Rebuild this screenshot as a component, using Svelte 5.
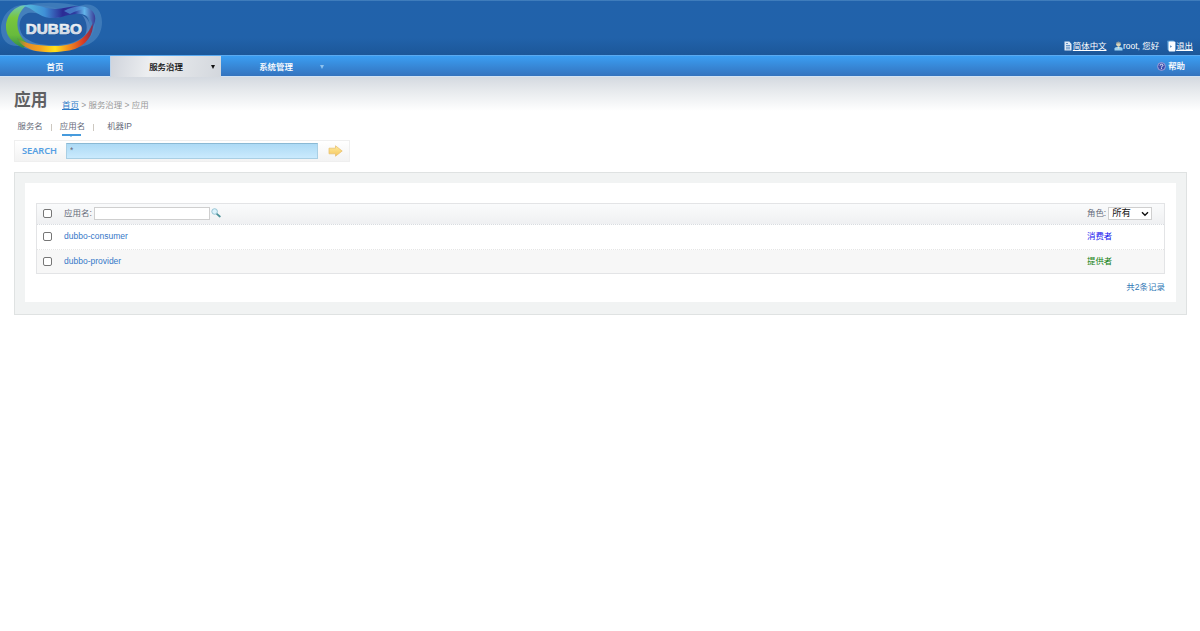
<script>
  let query = $state('*');
  let filter = $state('');
  const rows = [
    { name: 'dubbo-consumer', role: '消费者', color: 'blue' },
    { name: 'dubbo-provider', role: '提供者', color: 'green' }
  ];
</script>

<header>
  <svg class="logo" width="106" height="55" viewBox="0 0 106 55">
    <defs>
      <linearGradient id="warm" x1="0" x2="1">
        <stop offset="0" stop-color="#4ba03c" /><stop offset=".12" stop-color="#e08a2a" /><stop offset=".3" stop-color="#f5a21d" />
        <stop offset=".5" stop-color="#ffe21b" /><stop offset=".7" stop-color="#f08420" />
        <stop offset=".88" stop-color="#d63a24" /><stop offset="1" stop-color="#7a2c58" />
      </linearGradient>
      <linearGradient id="cool" x1="0" x2="1">
        <stop offset="0" stop-color="#58c0dc" /><stop offset=".3" stop-color="#3f8fd6" />
        <stop offset=".55" stop-color="#2b2a94" /><stop offset=".72" stop-color="#2f3da0" /><stop offset=".85" stop-color="#62b4ea" /><stop offset="1" stop-color="#3a3a94" />
      </linearGradient>
      <linearGradient id="leaf" x1="0" x2="0" y1="0" y2="1">
        <stop offset="0" stop-color="#6fc9b9" /><stop offset=".3" stop-color="#79c63c" /><stop offset=".7" stop-color="#68bb3c" /><stop offset="1" stop-color="#2f8a4a" />
      </linearGradient>
      <linearGradient id="steel" x1="0" x2="0" y1="0" y2="1">
        <stop offset="0" stop-color="#fff" /><stop offset="1" stop-color="#bcc6d6" />
      </linearGradient>
    </defs>
    <path d="M25 5C12 4 1 15 1 29c0 12 8 18 19 17 14 8 42 8 58 1 14-1 24-10 24-25C102 8 92 1 79 6 63 2 42 2 25 5Z" fill="#5a92c8" opacity=".5" />
    <path d="M25 7C12 10 5 20 7 31c3 11 14 17 30 19 17 2 35 0 46-6 11-7 14-18 11-27C88 6 74 6 60 9 47 5 37 4 25 7Z" fill="#4a83bf" opacity=".6" />
    <path d="M28 13C19 16 17 27 23 36c8 7 16 9 30 9 13 0 22-2 30-8 8-7 8-17 2-22-8-5-16-1-28 3-12 1-17-7-29-5Z" fill="#235da5" />
    <path d="M27 5C14 5 6 16 6 27c0 9 6 16 17 21l6-4C15 36 13 15 27 5Z" fill="url(#leaf)" />
    <path d="M17 38c8 6 22 8 38 8 18 0 32-6 38-24 1 14-8 23-18 27-13 4-33 4-43 1-8-3-13-7-15-12Z" fill="url(#warm)" />
    <path d="M23 6c12-4 21 3 32 3 12 0 20-6 33-1 8 4 9 11 5 19-1-8-6-13-13-13-12-1-19 5-30 4C38 17 34 8 23 6Z" fill="url(#cool)" />
    <path d="M64 11c9-5 18-6 24-2-7 0-13 2-18 5Z" fill="#54a2e0" opacity=".6" />
    <path d="M82 15c9 4 10 14 3 20 3-6 2-14-3-20Z" fill="#6c9bd2" opacity=".6" />
    <text x="26.3" y="34.4" textLength="56" lengthAdjust="spacingAndGlyphs" font-family="Liberation Sans, sans-serif" font-size="13.8" font-weight="700" fill="none" stroke="#1d4a8c" stroke-width="2" opacity=".45">DUBBO</text>
    <text x="25.8" y="34.1" textLength="56" lengthAdjust="spacingAndGlyphs" font-family="Liberation Sans, sans-serif" font-size="13.8" font-weight="700" fill="url(#steel)" stroke="#dfe5ee" stroke-width=".7">DUBBO</text>
  </svg>
  <div class="user">
    <svg width="8" height="10" viewBox="0 0 8 10"><path d="M.5.5h4.8L7.5 3v6.5h-7Z" fill="#dfeaf6" /><path d="M2 2.5h2M2 4.5h4M2 6.2h4M2 7.8h4" stroke="#467cb9" stroke-width=".8" /></svg><u>简体中文</u>
    <svg class="person" width="9" height="10" viewBox="0 0 9 10"><path d="M.5 9.4V7.6Q1 5.8 4.5 5.8T8.5 7.6v1.8Z" fill="#9fd3f2" /><path d="M3.6 5.5h1.8L4.5 8Z" fill="#f2e7c6" /><circle cx="4.5" cy="3.2" r="2.3" fill="#d9d3b4" /><path d="M2.1 3Q2.2.4 4.5.5T6.9 3Q4.5 1.6 2.1 3" fill="#8d9ba0" /></svg><span>root, 您好</span>
    <svg class="door" width="9" height="12" viewBox="0 0 9 12"><path d="M.3.8 6.5.5 7 2H2v8.6L.6 9.8Z" fill="#5fa5dc" /><rect x="1.6" y="1.6" width="6.8" height="10" rx="1" fill="#fafdff" /><path d="m3.2 5.3 1.8 1.2-1.8 1.2Z" fill="#447eb8" /></svg><u>退出</u>
  </div>
</header>

<nav>
  <div class="tab"><b>首页</b></div>
  <div class="tab active"><b>服务治理</b><i></i></div>
  <div class="tab sys"><b>系统管理</b><i></i></div>
  <div class="help"><svg width="9" height="9" viewBox="0 0 9 9"><circle cx="4.5" cy="4.5" r="3.9" fill="#3f4fae" stroke="#a9a9dc" stroke-width=".9" /><path d="M3.1 3.6Q3.2 2.2 4.5 2.2T5.9 3.5Q5.8 4.3 4.5 4.8v.6M4.5 6.2v.9" fill="none" stroke="#fff" stroke-width=".9" /></svg><b>帮助</b></div>
</nav>

<main>
  <div class="title"><h1>应用</h1><div class="crumb"><a href="#home">首页</a> &gt; 服务治理 &gt; 应用</div></div>
  <div class="kinds"><span>服务名</span><em></em><span class="on">应用名</span><em></em><span class="ip">机器IP</span></div>
  <div class="search">
    <strong>SEARCH</strong>
    <input aria-label="SEARCH" bind:value={query} />
    <svg width="15" height="12" viewBox="0 0 15 12"><defs><linearGradient id="gold" x2="0" y2="1"><stop stop-color="#ffec9e" /><stop offset="1" stop-color="#f5c65c" /></linearGradient></defs><path d="M1 3.2h6.5V.8L14.2 6l-6.7 5.2V8.8H1Z" fill="url(#gold)" stroke="#e8c173" stroke-width=".8" stroke-linejoin="round" /></svg>
  </div>
  <section>
    <div class="panel">
      <div class="table">
        <div class="row head">
          <input type="checkbox" /><label class="name"><span>应用名:</span><input class="filter" bind:value={filter} /></label>
          <svg class="lens" width="10" height="10" viewBox="0 0 10 10"><path d="m5.8 5.8 3 2.7" stroke="#4a9098" stroke-width="1.8" stroke-linecap="round" /><circle cx="3.6" cy="3.5" r="2.8" fill="#dcf2fb" stroke="#8ebfd0" stroke-width=".9" /></svg>
          <div class="role"><span>角色:</span><div class="select">所有<svg width="8" height="6" viewBox="0 0 8 6"><path d="m1 1.2 3 3 3-3" fill="none" stroke="#111" stroke-width="1.4" /></svg></div></div>
        </div>
        {#each rows as row}
          <div class="row"><input type="checkbox" /><a class="name" href="#app"><span>{row.name}</span></a><div class="role {row.color}"><span>{row.role}</span></div></div>
        {/each}
      </div>
      <div class="total">共2条记录</div>
    </div>
  </section>
</main>

<style>
  :global(body) { margin: 0; background: #fff; }
  :global(#app) { font: 8.45px/12px "Liberation Sans", "Noto Sans CJK SC", sans-serif; color: #666b7a; }
  svg { display: block; flex: none; }
  header { height: 55px; box-sizing: border-box; display: flex; justify-content: space-between; background: linear-gradient(#5c96cc 0, #2162ab 1px, #2162aa 38px, #1c5799 100%); }
  .user { display: flex; align-items: center; height: 12px; padding: 40px 7px 0 0; color: #fff; white-space: nowrap; }
  .user u { text-underline-offset: 1px; }
  .user svg { margin-right: 1px; }
  .user .person { margin-left: 7.5px; margin-right: 0; }
  .user .door { margin-left: 7.5px; margin-right: .5px; }
  nav { height: 22px; box-sizing: border-box; display: flex; border-top: 1px solid #5baaf0; border-bottom: 1px solid #d2e2f3; background: linear-gradient(#3b9ef2, #3473be); color: #fff; }
  nav b { font-weight: 500; -webkit-text-stroke: .1px; }
  .tab { width: 110px; height: 20px; display: flex; align-items: center; justify-content: center; position: relative; padding-top: 1px; box-sizing: border-box; }
  .tab i { position: absolute; right: 6px; top: 9px; border: 2px solid transparent; border-top: 4px solid #111; border-bottom: 0; }
  .active { width: 111px; height: 21px; padding-bottom: 1px; background: linear-gradient(100deg, #d0d4dc, #eceef0 35%, #d3d7dd); color: #111; border-left: 1px solid #bcd4ec; }
  .sys { padding-top: 2px; }
  .sys i { right: 7px; border-top-color: #8fc3ef; }
  .help { margin-left: auto; padding: 0 15px 0 0; display: flex; align-items: center; gap: 2px; height: 20px; }
  main { padding: 13px 13px 0 14px; background: linear-gradient(#d4d9e0, #e7eaed 14px, #fff 34px); }
  .title { display: flex; height: 30px; }
  h1 { margin: 0; font-size: 16.8px; line-height: 22px; width: 48px; color: #5f6062; }
  .crumb { padding-top: 9px; color: #999; white-space: nowrap; }
  .crumb a { color: #2e7bc8; text-decoration: underline; text-underline-offset: 1px; }
  .kinds { display: flex; height: 20px; padding-left: 3.5px; line-height: 13px; }
  .kinds em { width: 1px; height: 7px; margin: 4px 8px 0; background: #cdc8c0; }
  .on { position: relative; }
  .on::before { content: ""; position: absolute; left: 2px; top: 14px; width: 19px; height: 2px; background: #469bdd; }
  .on::after { content: ""; position: absolute; left: 10px; top: 16px; border: 1.5px solid transparent; border-top-color: #469bdd; border-bottom: 0; }
  .ip { margin-left: 5px; }
  .search { box-sizing: border-box; width: 336px; height: 22px; border: 1px solid #efefef; background: linear-gradient(#fff, #f3f3f3); display: flex; align-items: center; }
  .search strong { width: 51px; padding-right: 2px; box-sizing: border-box; text-align: center; font: 600 9.2px/12px "Open Sans", sans-serif; color: #549fe3; -webkit-text-stroke: .15px; }
  .search input { box-sizing: border-box; width: 252px; height: 16px; padding: 0 3px 2px; border: 1px solid #a9cfe4; border-top-color: #8ab9d4; border-radius: 0; background: linear-gradient(#addaf5, #caeafd); color: #667; font: 8.4px/12px "Liberation Sans", sans-serif; outline: 0; }
  .search svg { margin-left: 10px; }
  section { box-sizing: border-box; margin-top: 10px; height: 143px; padding: 10px; border: 1px solid #dfe2e2; background: #f1f3f3; }
  .panel { box-sizing: border-box; height: 119px; padding: 20px 11px 0; background: #fff; }
  .table { box-sizing: border-box; height: 71px; border: 1px solid #e3e4e6; }
  .row { box-sizing: border-box; height: 25px; padding-bottom: 1px; display: flex; align-items: center; border-bottom: 1px dotted #e5e5e5; }
  .row.head { height: 21px; background: linear-gradient(#fafbfc, #eff0f2); border-bottom-color: #d9dce0; }
  .row:last-child { height: 23px; padding-bottom: 1px; border-bottom: 0; background: #f7f7f7; }
  .row span { margin-top: -1px; }
  input[type="checkbox"] { width: 9px; height: 9px; box-sizing: border-box; margin: 0 12px 0 6px; appearance: none; border: 1px solid #767676; border-radius: 2px; background: #fff; }
  .name { display: flex; align-items: center; white-space: nowrap; font-size: 8.5px; }
  a.name { color: #3577c8; text-decoration: none; }
  .filter { box-sizing: border-box; width: 116px; height: 13px; margin: 0 0 0 2px; padding: 1px; border: 1px solid #cfcfcf; background: #fff; font: 8px/10px "Liberation Sans", sans-serif; }
  .lens { margin: -2px 0 0 1px; }
  .role { width: 77px; margin-left: auto; display: flex; align-items: center; white-space: nowrap; }
  .select { box-sizing: border-box; width: 44px; height: 13px; margin-left: 2px; padding: 0 2px 0 3px; border: 1px solid #cfcfcf; background: #fff; color: #111; display: flex; align-items: center; justify-content: space-between; font-size: 9.3px; line-height: 11px; }
  .blue { color: #1717ee; }
  .green { color: #118011; }
  .total { padding-top: 7px; text-align: right; color: #3178b5; font-size: 8.5px; }
</style>
